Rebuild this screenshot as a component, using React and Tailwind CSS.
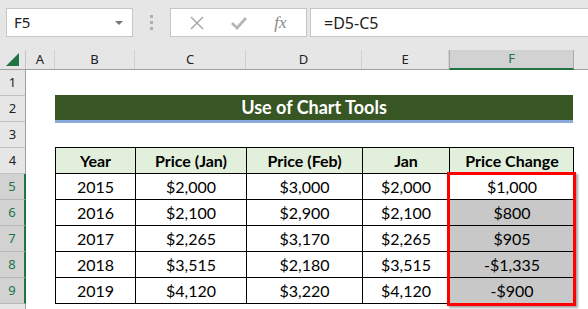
import React from 'react';

const cols = [
  { w: 'w-[29px]', label: 'A' },
  { w: 'w-[80px]', label: 'B' },
  { w: 'w-[111px]', label: 'C' },
  { w: 'w-[116px]', label: 'D' },
  { w: 'w-[87px]', label: 'E' },
  { w: 'w-[125px]', label: 'F', active: true },
];

const rows = [
  ['2015', '$2,000', '$3,000', '$2,000', '$1,000'],
  ['2016', '$2,100', '$2,900', '$2,100', '$800'],
  ['2017', '$2,265', '$3,170', '$2,265', '$905'],
  ['2018', '$3,515', '$2,180', '$3,515', '-$1,335'],
  ['2019', '$4,120', '$3,220', '$4,120', '-$900'],
];

const widths = ['w-[80px]', 'w-[111px]', 'w-[116px]', 'w-[87px]', 'w-[124px]'];

const sheetFont = { fontFamily: 'Lato, Carlito, Calibri, sans-serif' };
const uiFont = { fontFamily: '"Noto Sans", "Segoe UI", sans-serif' };

export default function App() {
  return (
    <div className="w-[588px] h-[309px] overflow-hidden bg-white" style={uiFont}>
      {/* formula bar */}
      <div className="h-[50px] bg-[#e6e6e6] flex items-start pt-[8px]">
        <div className="ml-[6px] w-[127px] h-[29px] bg-white border border-[#c6c6c6] flex items-center px-[7px] text-[15px] text-[#222]">
          <span>F5</span>
          <span className="ml-auto mr-[2px] w-0 h-0 border-l-[4px] border-r-[4px] border-t-[4px] border-l-transparent border-r-transparent border-t-[#777]" />
        </div>
        <div className="w-[37px] h-[29px] flex flex-col items-center justify-center gap-[3px]">
          <span className="w-[3px] h-[3px] bg-[#b0b0b0]" />
          <span className="w-[3px] h-[3px] bg-[#b0b0b0]" />
          <span className="w-[3px] h-[3px] bg-[#b0b0b0]" />
        </div>
        <div className="w-[137px] h-[29px] bg-white border border-[#c6c6c6] flex items-center justify-around px-[6px]">
          <svg width="14" height="14" viewBox="0 0 14 14">
            <path d="M1 1 L13 13 M13 1 L1 13" stroke="#ababab" strokeWidth="1.6" />
          </svg>
          <svg width="16" height="14" viewBox="0 0 16 14">
            <path d="M1 7 L6 12 L15 2" stroke="#b5b5b5" strokeWidth="2.8" fill="none" />
          </svg>
          <span className="text-[17px] italic text-[#8a8a8a] leading-none" style={{ fontFamily: '"Liberation Serif", serif' }}>fx</span>
        </div>
        <div className="ml-[3px] flex-1 h-[29px] bg-white border border-[#c6c6c6] border-r-0 flex items-center pl-[13px] text-[16px] text-[#222]">
          =D5-C5
        </div>
      </div>

      {/* column headers */}
      <div className="h-[20px] bg-[#e6e6e6] border-b border-[#9f9f9f] flex text-[13px] text-[#222]">
        <div className="w-[26px] border-r border-[#c6c6c6] flex items-end justify-center pb-[3px]">
          <svg width="13" height="13" viewBox="0 0 13 13">
            <path d="M13 0 L13 13 L0 13 Z" fill="#217346" />
          </svg>
        </div>
        {cols.map((c) =>
          c.active ? (
            <div key={c.label} className={`${c.w} bg-[#d2d2d2] border-x border-[#ababab] border-b-2 border-b-[#217346] -mb-px flex items-center justify-center text-[#217346]`}>
              {c.label}
            </div>
          ) : (
            <div key={c.label} className={`${c.w} border-r border-[#d0d0d0] flex items-center justify-center`}>
              {c.label}
            </div>
          )
        )}
        <div className="flex-1" />
      </div>

      <div className="flex">
        {/* row headers */}
        <div className="w-[26px] flex flex-col text-[13px]">
          {[1, 2, 3, 4, 5, 6, 7, 8, 9, 10].map((n) => {
            const sel = n >= 5 && n <= 9;
            return (
              <div
                key={n}
                className={
                  sel
                    ? 'h-[26px] shrink-0 bg-[#d2d2d2] border-b border-[#b8b8b8] border-r-2 border-r-[#217346] flex items-center justify-center text-[#217346]'
                    : 'h-[26px] shrink-0 bg-[#e6e6e6] border-b border-[#c0c0c0] border-r border-r-[#9f9f9f] flex items-center justify-center text-[#222]'
                }
              >
                {n < 10 ? n : ''}
              </div>
            );
          })}
        </div>

        {/* cells */}
        <div className="flex-1 pl-[29px]" style={sheetFont}>
          <div className="h-[25px]" />
          <div className="w-[518px] h-[28px] bg-[#375623] border-b-[3px] border-[#8ea9db] flex items-center justify-center text-white font-bold text-[18px]">
            Use of Chart Tools
          </div>
          <div className="h-[24px]" />
          <div className="relative w-[519px]">
            <div className="flex bg-[#e2efda] border border-black h-[27px] text-[16px] font-bold text-black">
              {['Year', 'Price (Jan)', 'Price (Feb)', 'Jan', 'Price Change'].map((h, i) => (
                <div key={h} className={`${widths[i]} ${i < 4 ? 'border-r border-black' : ''} flex items-center justify-center shrink-0`}>
                  {h}
                </div>
              ))}
            </div>
            {rows.map((r, ri) => (
              <div key={ri} className="flex border-x border-b border-black h-[26px] text-[16px] text-black">
                {r.map((v, i) => (
                  <div
                    key={i}
                    className={`${widths[i]} ${i < 4 ? 'border-r border-black' : ''} ${i === 4 && ri > 0 ? 'bg-[#c8c8c8]' : ''} flex items-center justify-center shrink-0`}
                  >
                    {v}
                  </div>
                ))}
              </div>
            ))}
            <div className="absolute left-[392px] top-[25px] w-[129px] h-[134px] border-[3px] border-[#ff0000] shadow-[2px_2px_2px_rgba(0,0,0,0.35)] pointer-events-none" />
          </div>
        </div>
      </div>
    </div>
  );
}
